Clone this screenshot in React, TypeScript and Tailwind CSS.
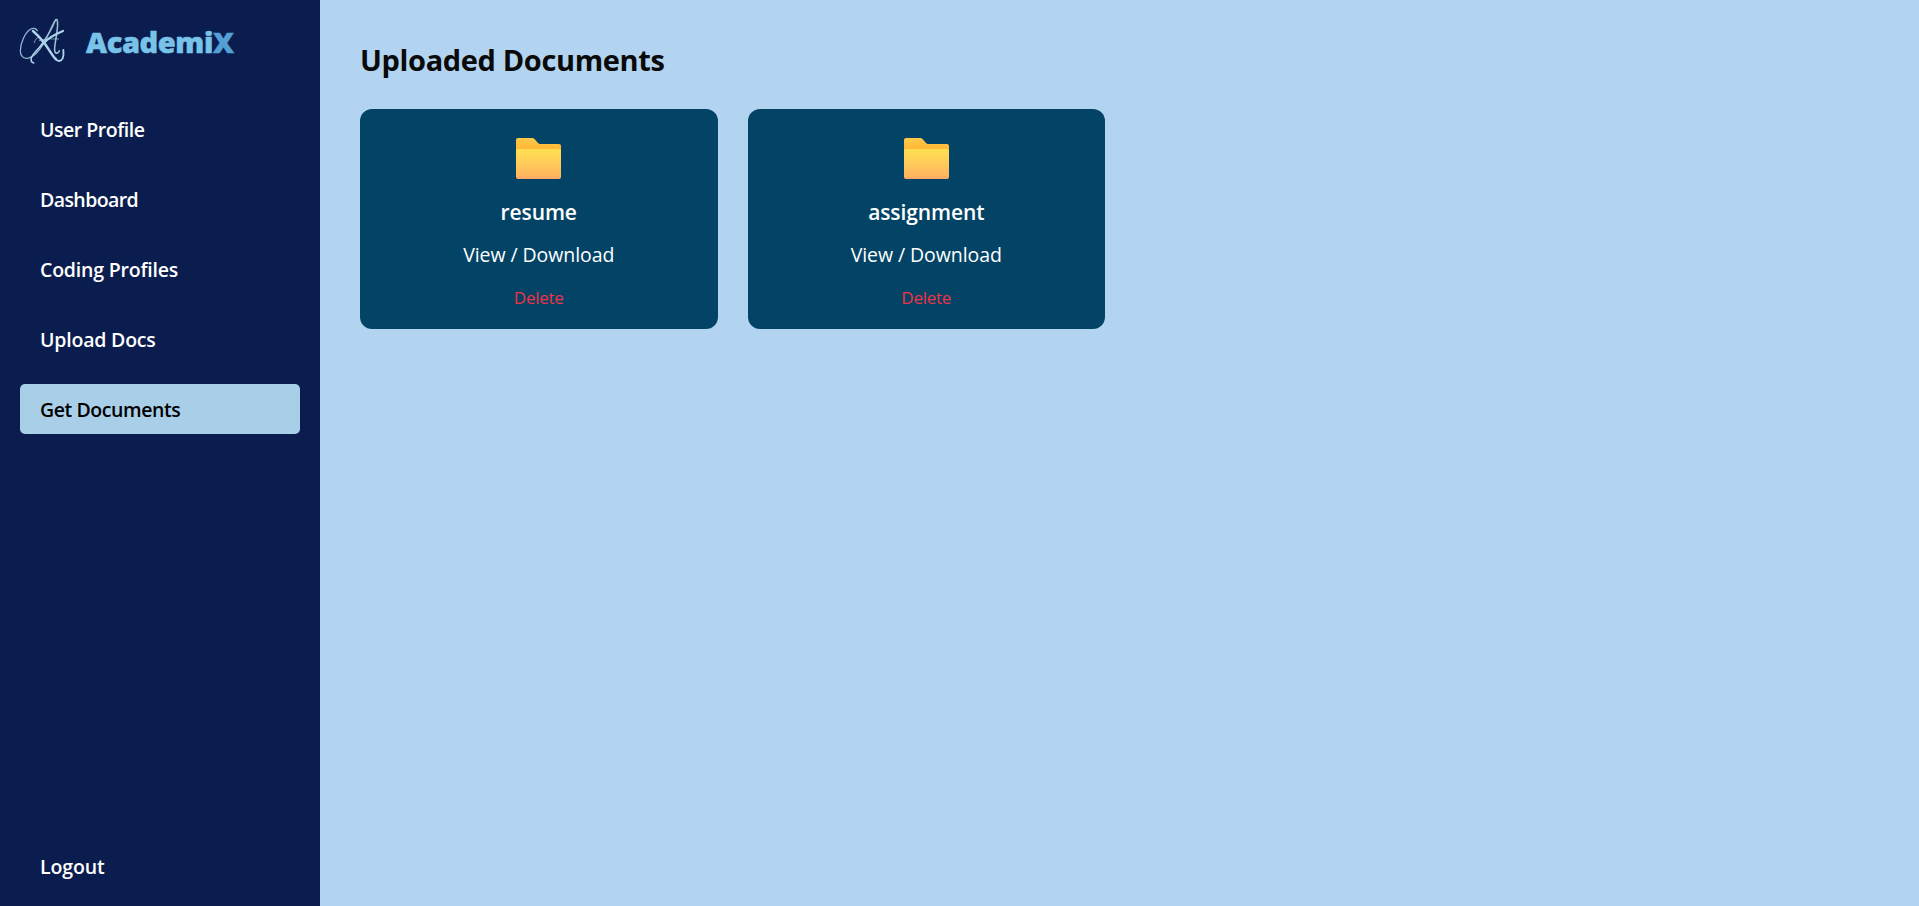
const navItems = [
  { label: "User Profile", tracking: "tracking-[-0.47px]" },
  { label: "Dashboard", tracking: "tracking-[-0.58px]" },
  { label: "Coding Profiles", tracking: "tracking-[-0.2px]" },
  { label: "Upload Docs", tracking: "tracking-[-0.2px]" },
  { label: "Get Documents", tracking: "tracking-[-0.42px]", active: true },
];

const documents = ["resume", "assignment"];

function Logo() {
  return (
    <svg
      viewBox="60 57 138 141"
      className="h-[47px] w-[46px] shrink-0 overflow-visible"
      fill="none"
      stroke="#add3ea"
      strokeLinecap="round"
      strokeLinejoin="round"
    >
      <path strokeWidth="3.8" opacity="0.85" d="M112 92C108 84 99 83 91 88C75 98 61 130 61 153C61 168 70 176 83 175C102 172 120 150 132 128" />
      <path strokeWidth="4.6" opacity="0.9" d="M120 140C136 118 155 88 162 70C165 62 168 56 171 59C174 66 172 90 169 108C166 130 161 148 165 156C169 163 176 158 178 152" />
      <path strokeWidth="2.6" opacity="0.65" d="M165 61C156 72 147 94 140 118" />
      <path strokeWidth="7.5" d="M99 93C112 104 121 114 133 129C145 145 157 168 167 177" />
      <path strokeWidth="5.6" d="M165 175C174 187 183 184 188 175C191 168 191 159 190 150" />
      <path strokeWidth="6.6" d="M189 93C170 101 147 112 132 128" />
      <path strokeWidth="4.8" d="M132 128C118 143 99 160 94 173C92 183 96 188 101 189" />
      <path strokeWidth="2.8" opacity="0.7" d="M103 128C104 121 109 113 116 112M118 122C132 117 150 116 176 117" />
    </svg>
  );
}

function FolderIcon({ id }: { id: string }) {
  return (
    <svg viewBox="0 0 45 41" className="h-[41px] w-[45px]">
      <defs>
        <linearGradient id={`${id}-back`} x1="0" y1="0" x2="0" y2="12" gradientUnits="userSpaceOnUse">
          <stop offset="0" stopColor="#ffcb4a" />
          <stop offset="1" stopColor="#ffb437" />
        </linearGradient>
        <linearGradient id={`${id}-front`} x1="0" y1="0" x2="0" y2="1">
          <stop offset="0" stopColor="#ffdf50" />
          <stop offset="0.5" stopColor="#ffcb5b" />
          <stop offset="0.9" stopColor="#ffb55f" />
          <stop offset="1" stopColor="#ffa465" />
        </linearGradient>
      </defs>
      <path fill={`url(#${id}-back)`} d="M0 2Q0 0 2 0H16Q17.500 0 18.500 1L22 5Q23 6 24 6H43Q45 6 45 8V20H0Z" />
      <path fill={`url(#${id}-front)`} d="M0 13Q0 11 2 11H43Q45 11 45 13V39Q45 41 43 41H2Q0 41 0 39Z" />
    </svg>
  );
}

function DocumentCard({ name }: { name: string }) {
  return (
    <article className="flex h-[220px] flex-col items-center rounded-xl bg-[#034466] pt-[29px] text-white">
      <FolderIcon id={name} />
      <h3 className="mt-[18px] text-[21px] leading-[30px] font-semibold tracking-[-0.1px]">{name}</h3>
      <a className="mt-[13px] text-[19.5px] leading-[30px] tracking-[-0.07px]">View / Download</a>
      <button className="mt-[14px] text-[17px] leading-[28px] tracking-[-0.24px] text-[#f03245]">Delete</button>
    </article>
  );
}

export default function App() {
  return (
    <div className="flex h-screen bg-[#b2d4f0] font-['Open_Sans','Noto_Sans',sans-serif]">
      <aside className="flex w-80 shrink-0 flex-col bg-[#0b1d4e] px-5 pb-[15px] text-white">
        <header className="flex h-[84px] items-center gap-5">
          <Logo />
          <span className="text-[29px] font-extrabold tracking-[-0.4px] text-[#7ac3e8] [-webkit-text-stroke:0.5px]">
            Academi<span className="text-[#549fd6]">X</span>
          </span>
        </header>
        <nav className="mt-5 flex flex-1 flex-col gap-5 text-[19.5px] leading-[48px] font-semibold">
          {navItems.map(({ label, tracking, active }) => (
            <a key={label} className={`rounded-[5px] px-5 pt-0.5 ${tracking} ${active ? "bg-[#a9cee8] text-black" : ""}`}>
              {label}
            </a>
          ))}
          <a className="mt-auto px-5 pt-0.5 tracking-[-0.1px]">Logout</a>
        </nav>
      </aside>
      <main className="flex-1 p-10">
        <h1 className="mb-[29px] text-[29px] leading-[40px] font-bold tracking-[-0.36px] text-[#0a0a0a]">Uploaded Documents</h1>
        <section className="grid grid-cols-[repeat(4,357.500px)] gap-[30px]">
          {documents.map((name) => (
            <DocumentCard key={name} name={name} />
          ))}
        </section>
      </main>
    </div>
  );
}
